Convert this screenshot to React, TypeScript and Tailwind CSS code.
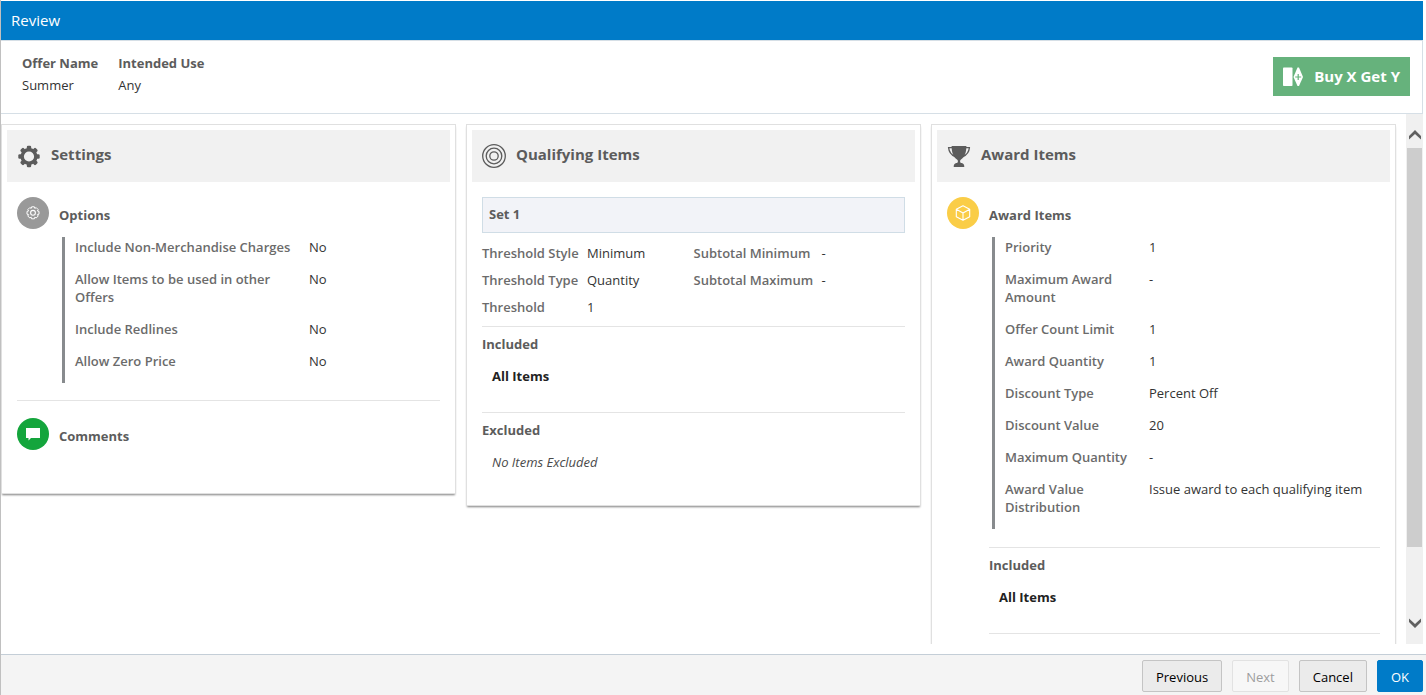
import type { ReactNode } from "react";

type Field = {
  label: string;
  value: string;
};

const optionFields: Field[] = [
  { label: "Include Non-Merchandise Charges", value: "No" },
  { label: "Allow Items to be used in other Offers", value: "No" },
  { label: "Include Redlines", value: "No" },
  { label: "Allow Zero Price", value: "No" },
];

const awardFields: Field[] = [
  { label: "Priority", value: "1" },
  { label: "Maximum Award Amount", value: "-" },
  { label: "Offer Count Limit", value: "1" },
  { label: "Award Quantity", value: "1" },
  { label: "Discount Type", value: "Percent Off" },
  { label: "Discount Value", value: "20" },
  { label: "Maximum Quantity", value: "-" },
  { label: "Award Value Distribution", value: "Issue award to each qualifying item" },
];

const thresholdFields: Field[] = [
  { label: "Threshold Style", value: "Minimum" },
  { label: "Threshold Type", value: "Quantity" },
  { label: "Threshold", value: "1" },
];

const subtotalFields: Field[] = [
  { label: "Subtotal Minimum", value: "-" },
  { label: "Subtotal Maximum", value: "-" },
];

function GearIcon() {
  return (
    <svg viewBox="0 0 24 24" className="size-6" fill="none" stroke="#5c5c5c">
      <circle cx="12" cy="12.5" r="6.8" strokeWidth="3.4" />
      {[0, 45, 90, 135, 180, 225, 270, 315].map((angle) => (
        <rect
          key={angle}
          x="9.8"
          y="1.8"
          width="4.4"
          height="4.2"
          rx="1.3"
          fill="#5c5c5c"
          stroke="none"
          transform={`rotate(${angle} 12 12.5)`}
        />
      ))}
    </svg>
  );
}

function TargetIcon() {
  return (
    <svg viewBox="0 0 24 24" className="size-6" fill="none" stroke="#5c5c5c" strokeWidth="1.3">
      <circle cx="12" cy="12" r="11.3" />
      <circle cx="12" cy="12" r="7.8" />
      <circle cx="12" cy="12" r="4.2" />
    </svg>
  );
}

function TrophyIcon() {
  return (
    <svg viewBox="0 0 24 24" className="size-6" fill="#5c5c5c">
      <path d="M4.600 2h14.800c0 6.500-1.700 11-5.400 13.500-.7.5-.9 1-.9 1.700 0 1.100.4 1.600 1.600 1.900 1.800.4 2.600 1.400 2.600 3.900H6.700c0-2.500.8-3.500 2.600-3.900 1.200-.3 1.600-.8 1.600-1.900 0-.7-.2-1.200-.9-1.700C6.300 13 4.600 8.500 4.600 2z" />
      <path
        d="M5.500 3.600H1.600c.3 4 2.700 7.300 6.600 9M18.500 3.600h3.900c-.3 4-2.700 7.300-6.600 9"
        fill="none"
        stroke="#5c5c5c"
        strokeWidth="1.300"
      />
    </svg>
  );
}

function CogIcon() {
  return (
    <svg viewBox="0 0 16 16" className="size-4" fill="none" stroke="#fff" strokeLinejoin="round">
      <path d="M6.600 1.800h2.800l.4 1.600 1.400-.8 2 2-.8 1.400 1.600.4v2.800l-1.600.4.8 1.400-2 2-1.400-.8-.4 1.600H6.600l-.4-1.600-1.400.8-2-2 .8-1.400-1.600-.4V6.400L3.600 6l-.8-1.400 2-2 1.400.8z" />
      <circle cx="8" cy="7.800" r="2.400" strokeWidth="1.100" />
    </svg>
  );
}

function CommentIcon() {
  return (
    <svg viewBox="0 0 16 16" className="size-4" fill="#fff">
      <path d="M1 2h14v10H6L3.500 14.500V12H1z" />
    </svg>
  );
}

function CubeIcon() {
  return (
    <svg viewBox="0 0 16 16" className="size-4" fill="none" stroke="#fff" strokeWidth="1.100" strokeLinejoin="round">
      <path d="M8 .7l6.700 3.600v7.400L8 15.300l-6.700-3.600V4.300zM1.300 4.300L8 8l6.700-3.700M8 8v7.300" />
    </svg>
  );
}

function OfferIcon() {
  return (
    <svg viewBox="0 0 20 20" className="size-5" fill="#fff">
      <rect x="0" y="0.500" width="9.500" height="18.500" rx="0.800" />
      <path d="M14.500.5h1.500L20 10l-4 9h-1.500l-4-9z" />
      <path d="M15.200 7v6M12.200 10h6" stroke="#66b27c" strokeWidth="1.200" />
    </svg>
  );
}

function Card({ icon, title, children }: { icon: ReactNode; title: string; children: ReactNode }) {
  return (
    <section className="border border-[#e0e0e0] bg-white p-[5px] shadow-[0_2px_2px_-1px_#808080]">
      <header className="flex h-[52px] items-center gap-2.5 bg-[#f1f1f1] px-2.5">
        {icon}
        <h2 className="pb-1 text-[15px] font-bold">{title}</h2>
      </header>
      <div className="px-2.5 pt-[15px]">{children}</div>
    </section>
  );
}

function SectionTitle({ badge, children }: { badge: ReactNode; children: ReactNode }) {
  return (
    <div className="flex items-center gap-2.5">
      {badge}
      <h3 className="pt-1 font-bold">{children}</h3>
    </div>
  );
}

function DetailList({ fields, columns }: { fields: Field[]; columns: string }) {
  return (
    <dl className="mt-2 ml-[45px] border-l-[3px] border-[#888b8e] pl-2.5">
      {fields.map((field) => (
        <div key={field.label} className={`grid pt-px pb-[13px] ${columns}`}>
          <dt className="font-semibold text-[#6b6b6b]">{field.label}</dt>
          <dd className="text-[#333]">{field.value}</dd>
        </div>
      ))}
    </dl>
  );
}

function ThresholdList({ fields, columns }: { fields: Field[]; columns: string }) {
  return (
    <dl className="flex flex-col gap-[9px]">
      {fields.map((field) => (
        <div key={field.label} className={`grid ${columns}`}>
          <dt className="font-semibold whitespace-nowrap text-[#6b6b6b]">{field.label}</dt>
          <dd className="text-[#333]">{field.value}</dd>
        </div>
      ))}
    </dl>
  );
}

function ItemGroup({ title, children }: { title: string; children: ReactNode }) {
  return (
    <div className="border-t border-[#e4e4e4] pt-2 pb-[27px]">
      <h3 className="font-bold">{title}</h3>
      <div className="mt-3.5 ml-2.5">{children}</div>
    </div>
  );
}

export default function App() {
  return (
    <div className="flex h-screen flex-col border-l border-[#c0c0c0] bg-white pt-px font-['Open_Sans','Noto_Sans',sans-serif] text-[13px] leading-[18px] text-[#5c5c5c]">
      <header className="mr-[3px] flex h-[39px] shrink-0 items-center bg-[#007bc8] px-2.5">
        <h1 className="pb-0.5 text-[15px] text-white">Review</h1>
      </header>

      <div className="mr-[3px] flex h-[74px] shrink-0 items-start justify-between border border-l-0 border-[#d6dfe6] pr-3 pl-[21px]">
        <dl className="flex gap-5 pt-[13px]">
          <div>
            <dt className="font-bold">Offer Name</dt>
            <dd className="mt-1 text-[#333]">Summer</dd>
          </div>
          <div>
            <dt className="font-bold">Intended Use</dt>
            <dd className="mt-1 text-[#333]">Any</dd>
          </div>
        </dl>
        <div className="mt-4 flex h-[39px] items-center gap-[11px] bg-[#66b27c] px-2.5 text-[15px] font-bold text-white">
          <OfferIcon />
          <span className="pb-0.5">Buy X Get Y</span>
        </div>
      </div>

      <div className="mr-[3px] mb-2.5 flex min-h-0 flex-1">
        <main className="min-w-0 flex-1 overflow-hidden pt-2.5 pr-2.5">
          <div className="grid grid-cols-3 items-start">
            <div className="mr-2.5">
              <Card icon={<GearIcon />} title="Settings">
                <SectionTitle
                  badge={
                    <span className="flex size-8 items-center justify-center rounded-full bg-[#999]">
                      <CogIcon />
                    </span>
                  }
                >
                  Options
                </SectionTitle>
                <DetailList fields={optionFields} columns="grid-cols-[224px_1fr] gap-x-2.5" />
                <div className="mt-[17px] border-t border-[#e4e4e4] pt-[17px] pb-[38px]">
                  <SectionTitle
                    badge={
                      <span className="flex size-8 items-center justify-center rounded-full bg-[#14a53c]">
                        <CommentIcon />
                      </span>
                    }
                  >
                    Comments
                  </SectionTitle>
                </div>
              </Card>
            </div>

            <div className="mr-2.5">
              <Card icon={<TargetIcon />} title="Qualifying Items">
                <h3 className="flex h-9 items-center border border-[#d0dde6] bg-[#f2f3f8] px-1.5 pb-0.5 font-bold">
                  Set 1
                </h3>
                <div className="grid grid-cols-2 pt-[11px] pb-2.5">
                  <ThresholdList fields={thresholdFields} columns="grid-cols-[105px_1fr]" />
                  <ThresholdList fields={subtotalFields} columns="grid-cols-[128px_1fr]" />
                </div>
                <ItemGroup title="Included">
                  <p className="font-bold text-[#222]">All Items</p>
                </ItemGroup>
                <div className="pb-0.5">
                  <ItemGroup title="Excluded">
                    <p className="text-[#4a4a4a] italic">No Items Excluded</p>
                  </ItemGroup>
                </div>
              </Card>
            </div>

            <Card icon={<TrophyIcon />} title="Award Items">
              <SectionTitle
                badge={
                  <span className="flex size-8 items-center justify-center rounded-full bg-[#facd47]">
                    <CubeIcon />
                  </span>
                }
              >
                Award Items
              </SectionTitle>
              <DetailList fields={awardFields} columns="grid-cols-[130px_1fr] gap-x-3.5" />
              <div className="mt-[18px] ml-[42px] border-b border-[#e4e4e4]">
                <ItemGroup title="Included">
                  <p className="font-bold text-[#222]">All Items</p>
                </ItemGroup>
              </div>
              <div className="h-24" />
            </Card>
          </div>
        </main>

        <div className="flex w-[17px] flex-col bg-[#f0f0f0]">
          <button type="button" aria-label="Scroll up" className="flex h-[34px] shrink-0 items-center justify-center pt-2">
            <svg viewBox="0 0 12 10" className="h-2.5 w-3" fill="#606060">
              <path d="M6 0l6 6v3.500L6 4 0 9.500V6z" />
            </svg>
          </button>
          <div className="mx-px h-[399px] bg-[#cdcdcd]" />
          <button type="button" aria-label="Scroll down" className="mt-auto flex h-[34px] shrink-0 items-center justify-center pb-2">
            <svg viewBox="0 0 12 10" className="h-2.5 w-3" fill="#606060">
              <path d="M6 10L0 4V.5L6 6l6-5.500V4z" />
            </svg>
          </button>
        </div>
      </div>

      <footer className="flex h-[41px] shrink-0 items-start justify-end gap-2.5 border-t border-[#c4ced7] bg-[#f4f4f4] pt-[5px] pr-[3px] text-black">
        <button type="button" className="h-8 rounded-xs border border-[#c4c4c4] bg-[#ebebeb] px-[13px] pt-0.5">
          Previous
        </button>
        <button
          type="button"
          disabled
          className="h-8 rounded-xs border border-[#e2e2e2] bg-[#f7f7f7] px-[13px] pt-0.5 text-[#9e9e9e]"
        >
          Next
        </button>
        <button type="button" className="h-8 rounded-xs border border-[#c4c4c4] bg-[#ebebeb] px-[13px] pt-0.5">
          Cancel
        </button>
        <button type="button" className="h-8 rounded-xs border border-[#007bc8] bg-[#007bc8] px-[13px] pt-0.5 text-white">
          OK
        </button>
      </footer>
    </div>
  );
}
